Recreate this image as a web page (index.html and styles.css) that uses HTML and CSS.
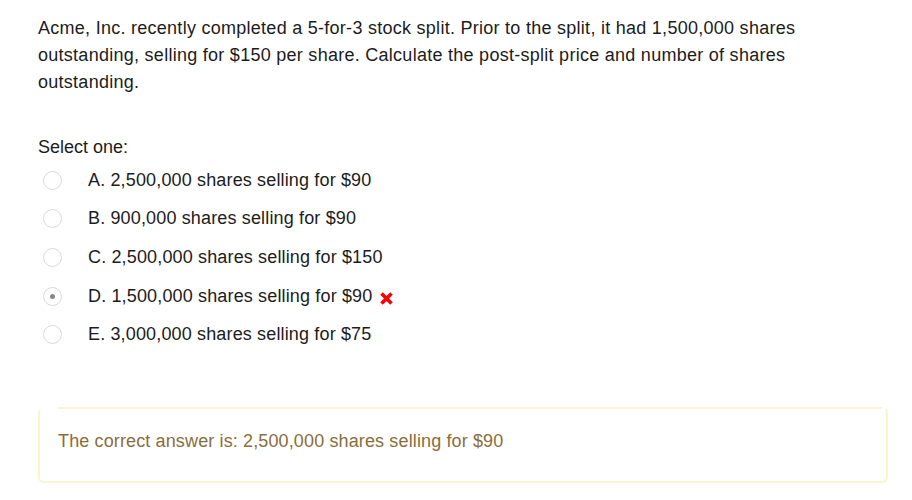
FILE: index.html
```html
<!DOCTYPE html>
<html>
<head>
<meta charset="utf-8">
<link rel="stylesheet" href="styles.css">
</head>
<body>
<div class="page">
  <div class="question">Acme, Inc. recently completed a 5-for-3 stock split. Prior to the split, it had 1,500,000 shares outstanding, selling for $150 per share. Calculate the post-split price and number of shares outstanding.</div>
  <div class="prompt">Select one:</div>
  <div class="answers">
    <div class="option"><span class="radio"></span><span class="label">A. 2,500,000 shares selling for $90</span></div>
    <div class="option"><span class="radio"></span><span class="label">B. 900,000 shares selling for $90</span></div>
    <div class="option"><span class="radio"></span><span class="label">C. 2,500,000 shares selling for $150</span></div>
    <div class="option"><span class="radio checked"></span><span class="label">D. 1,500,000 shares selling for $90</span>
      <svg class="wrong" width="15" height="15" viewBox="0 0 15 15"><path d="M2.5 2.5 L12.5 12.5 M12.5 2.5 L2.5 12.5" stroke="#f00" stroke-width="3.6" stroke-linecap="butt"/></svg>
    </div>
    <div class="option"><span class="radio"></span><span class="label">E. 3,000,000 shares selling for $75</span></div>
  </div>
  <div class="feedback">The correct answer is: 2,500,000 shares selling for $90</div>
</div>
</body>
</html>
```
FILE: styles.css
```css
html, body {
  margin: 0;
  padding: 0;
  background: #fff;
}
body {
  font-family: "Liberation Sans", Arial, sans-serif;
  color: #1c1c1c;
}
.page {
  width: 850px;
  padding: 15px 0 0 38px;
}
.question {
  font-size: 18px;
  letter-spacing: 0.27px;
  line-height: 27px;
  width: 800px;
}
.prompt {
  margin-top: 39px;
  font-size: 18px;
  line-height: 24px;
}
.answers {
  margin-top: 2px;
  display: flex;
  flex-direction: column;
}
.option {
  display: flex;
  align-items: center;
  height: 38.6px;
  font-size: 18px;
  letter-spacing: 0.15px;
}
.radio {
  width: 17px;
  height: 17px;
  border: 1.5px solid #dadada;
  border-radius: 50%;
  margin-left: 5px;
  margin-right: 26px;
  display: flex;
  align-items: center;
  justify-content: center;
  box-sizing: content-box;
}
.radio.checked::after {
  content: "";
  width: 5px;
  height: 5px;
  border-radius: 50%;
  background: #888;
}
.wrong {
  margin-left: 7px;
  margin-top: 4px;
}
.feedback {
  margin-top: 53px;
  position: relative;
  height: 76px;
  box-sizing: border-box;
  border: 2px solid #fcf3d0;
  border-top-color: transparent;
  border-radius: 6px;
  padding: 20px 0 0 18px;
  font-size: 18px;
  letter-spacing: 0.13px;
  line-height: 24px;
  color: #8a6d3b;
}
.feedback::before {
  content: "";
  position: absolute;
  top: -2px;
  left: 18px;
  right: 4px;
  height: 2px;
  background: #fcf3d0;
}
```
